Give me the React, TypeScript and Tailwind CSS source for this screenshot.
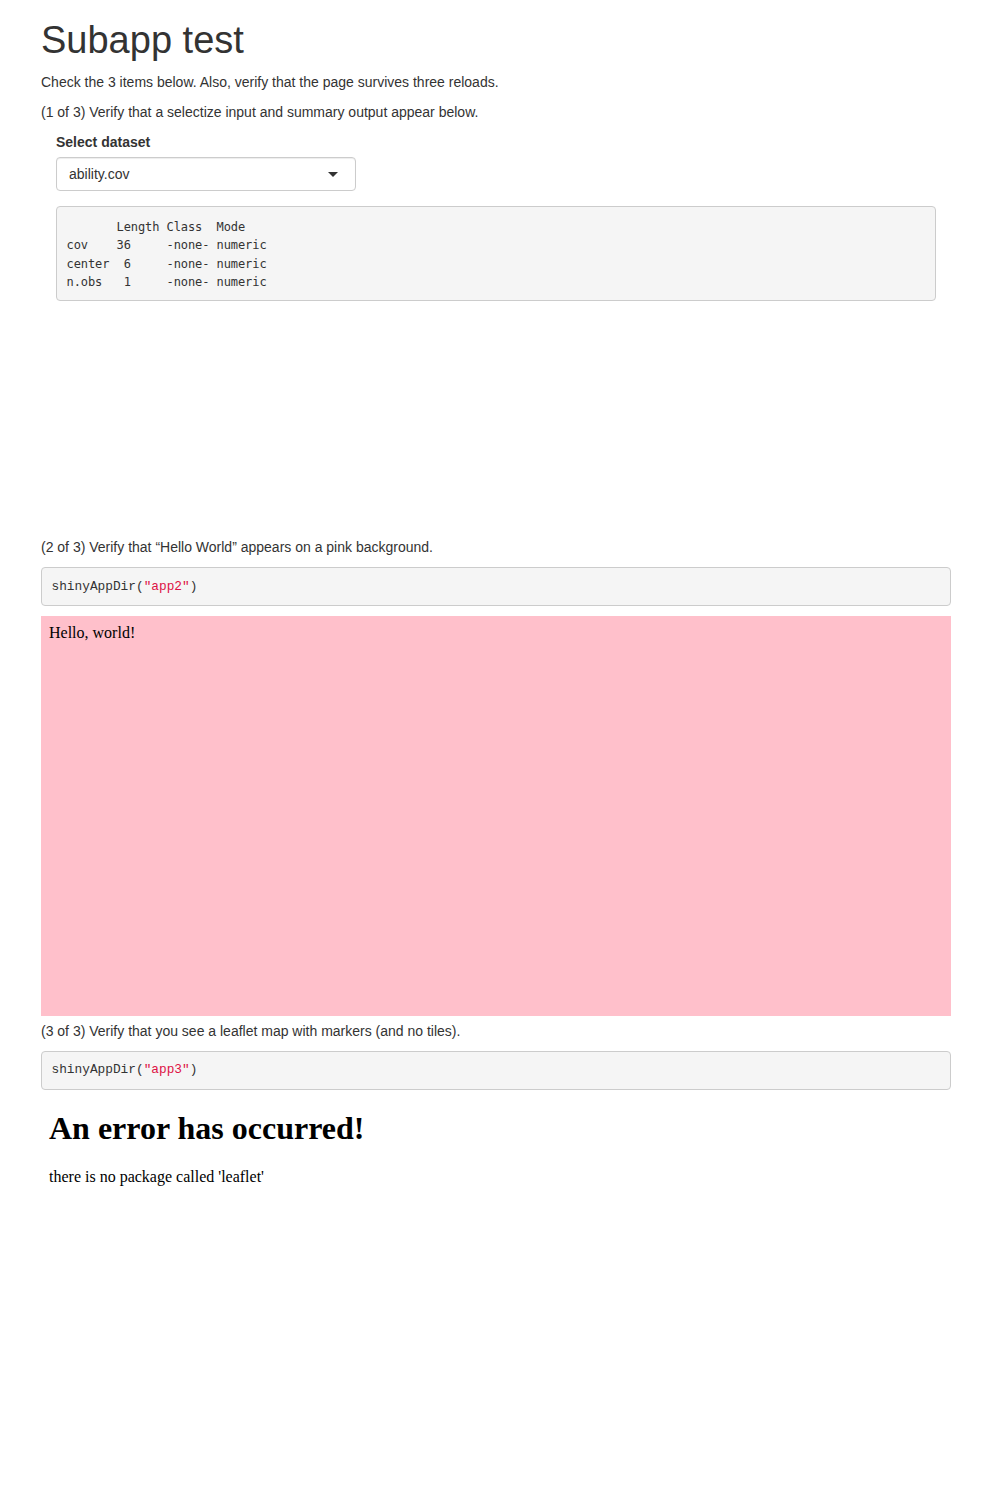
import React from "react";

export default function App() {
  return (
    <div className="min-h-[1506px] bg-white">
      <div
        className="px-[41px] text-[14px] leading-[20px] text-[#333]"
        style={{ fontFamily: '"Liberation Sans", Arial, sans-serif' }}
      >
        <h1 className="mt-[20px] mb-[10px] text-[38px] leading-[41.8px] font-normal">Subapp test</h1>
        <p className="mb-[10px]">Check the 3 items below. Also, verify that the page survives three reloads.</p>
        <p className="mb-[10px]">(1 of 3) Verify that a selectize input and summary output appear below.</p>

        {/* subapp 1 */}
        <div className="h-[400px] px-[15px] mb-[5.5px]">
          <div className="mb-[15px]">
            <label className="mb-[5px] inline-block font-bold">Select dataset</label>
            <div className="relative flex h-[34px] w-[300px] items-center rounded-[4px] border border-[#ccc] bg-white px-[12px] shadow-[inset_0_1px_1px_rgba(0,0,0,0.075)]">
              <span>ability.cov</span>
              <span className="absolute right-[17px] top-[14px] h-0 w-0 border-x-[5px] border-t-[5px] border-x-transparent border-t-[#333]" />
            </div>
          </div>
          <pre
            className="m-0 rounded-[4px] border border-[#ccc] bg-[#f5f5f5] px-[9.5px] pt-[11px] pb-[8px] text-[12px] leading-[18.57px] tracking-[-0.08px] text-[#333]"
            style={{ fontFamily: '"DejaVu Sans Mono", monospace' }}
          >
{`       Length Class  Mode   
cov    36     -none- numeric
center  6     -none- numeric
n.obs   1     -none- numeric`}
          </pre>
        </div>

        <p className="mb-[10px]">(2 of 3) Verify that “Hello World” appears on a pink background.</p>
        <pre
          className="m-0 mb-[10px] rounded-[4px] border border-[#ccc] bg-[#f5f5f5] p-[9.5px] text-[12.8px] leading-[18px] text-[#333]"
          style={{ fontFamily: '"Liberation Mono", "Courier New", monospace' }}
        >
          shinyAppDir(<span className="text-[#dd1144]">"app2"</span>)
        </pre>
        <div
          className="h-[400px] bg-[#ffc0cb] p-[8px] text-[16px] leading-[18.4px] text-black"
          style={{ fontFamily: '"Liberation Serif", "Times New Roman", serif' }}
        >
          Hello, world!
        </div>

        <p className="mt-[4.6px] mb-[10px]">(3 of 3) Verify that you see a leaflet map with markers (and no tiles).</p>
        <pre
          className="m-0 mb-[10px] rounded-[4px] border border-[#ccc] bg-[#f5f5f5] p-[9.5px] text-[12.8px] leading-[18px] text-[#333]"
          style={{ fontFamily: '"Liberation Mono", "Courier New", monospace' }}
        >
          shinyAppDir(<span className="text-[#dd1144]">"app3"</span>)
        </pre>
        <div
          className="px-[8px] pt-[10px] text-black"
          style={{ fontFamily: '"Liberation Serif", "Times New Roman", serif' }}
        >
          <h1 className="text-[32px] leading-[36.8px] font-bold">An error has occurred!</h1>
          <p className="mt-[21.4px] text-[16px] leading-[18.4px]">there is no package called 'leaflet'</p>
        </div>
      </div>
    </div>
  );
}
